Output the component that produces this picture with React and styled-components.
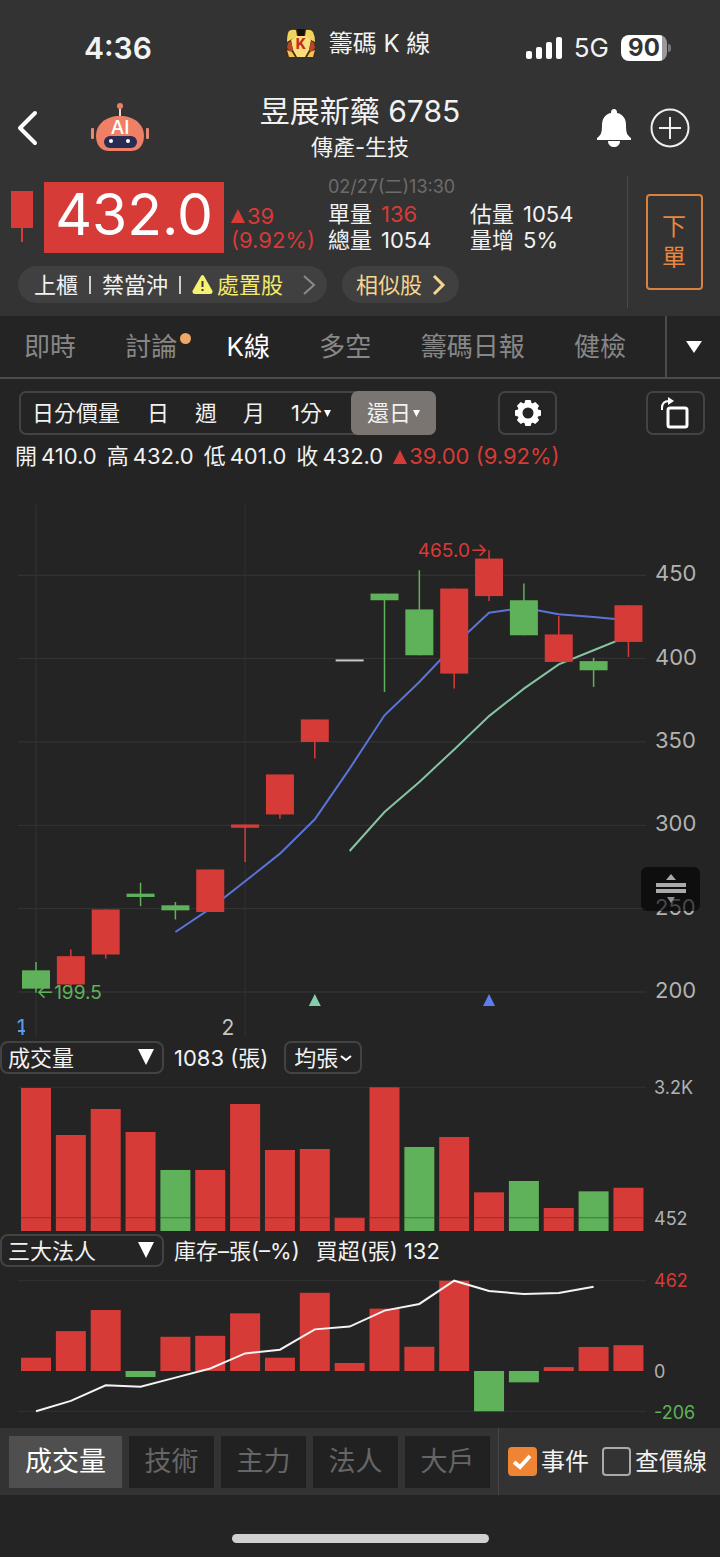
import React, { useState } from 'react';
import styled, { createGlobalStyle } from 'styled-components';

const RED = '#d73b37';
const GREEN = '#5fb259';

const GlobalStyle = createGlobalStyle`
  * {
    box-sizing: border-box;
  }

  body {
    margin: 0;
    background: #242424;
    color: #f2f2f2;
    font-family: Inter, "Noto Sans CJK TC", sans-serif;
  }

  button,
  select {
    margin: 0;
    padding: 0;
    border: none;
    background: none;
    color: inherit;
    font: inherit;
    cursor: pointer;
  }

  svg {
    display: block;
    flex-shrink: 0;
  }

  svg text {
    font-family: Inter, "Noto Sans CJK TC", sans-serif;
  }
`;

const Page = styled.div`
  display: flex;
  flex-direction: column;
  white-space: nowrap;
`;

const TopArea = styled.header`
  background: #333;
`;

const StatusBar = styled.div`
  display: grid;
  grid-template-columns: 1fr auto 1fr;
  align-items: center;
  padding: 28px 53px 0 84px;
  height: 68px;
`;

const Clock = styled.span`
  font-size: 30px;
  line-height: 40px;
  font-weight: 600;
`;

const AppName = styled.div`
  display: flex;
  align-items: center;
  gap: 12px;
  padding: 0 36px 8px 0;
  font-size: 24px;
  line-height: 32px;
`;

const StatusIcons = styled.div`
  display: flex;
  align-items: center;
  justify-content: flex-end;
  gap: 12px;
  font-size: 26px;
  line-height: 32px;
`;

const Battery = styled.span`
  position: relative;
  width: 46px;
  border-radius: 8px;
  background: linear-gradient(90deg, #fff 90%, #999 90%);
  color: #333;
  font-size: 24px;
  line-height: 26px;
  font-weight: 700;
  text-align: center;

  &::after {
    content: '';
    position: absolute;
    top: 9px;
    right: -4px;
    width: 3px;
    height: 8px;
    border-radius: 0 3px 3px 0;
    background: #777;
  }
`;

const NavBar = styled.div`
  display: grid;
  grid-template-columns: 1fr auto 1fr;
  align-items: center;
  padding: 24px 30px 10px 16px;
`;

const NavSide = styled.div`
  display: flex;
  align-items: center;
  justify-content: ${(props) => (props.$right ? 'flex-end' : 'flex-start')};
  gap: ${(props) => (props.$right ? '18px' : '52px')};
`;

const IconButton = styled.button`
  display: flex;
`;

const TitleBlock = styled.div`
  padding-left: 14px;
  text-align: center;
`;

const Title = styled.h1`
  margin: 0;
  font-size: 30px;
  line-height: 38px;
  font-weight: 400;
`;

const Subtitle = styled.p`
  margin: 0;
  font-size: 22px;
  line-height: 34px;
`;

const Quote = styled.section`
  display: flex;
  padding: 4px 0 8px;
`;

const QuoteMain = styled.div`
  flex: 1;
  padding-left: 11px;
`;

const QuoteRow = styled.div`
  display: flex;
  align-items: flex-start;
`;

const Price = styled.div`
  margin: 4px 7px 0 11px;
  width: 180px;
  height: 71px;
  background: ${RED};
  color: #fff;
  font-size: 57px;
  line-height: 66px;
  text-align: center;
`;

const Change = styled.div`
  display: flex;
  flex-direction: column;
  width: 97px;
  padding-top: 26px;
  color: ${RED};
  font-size: 22px;
  line-height: 24px;
`;

const WithTriangle = styled.span`
  display: flex;
  align-items: center;
  gap: 2px;
`;

const Facts = styled.div`
  display: grid;
  grid-template-columns: 142px auto;
  font-size: 22px;
  line-height: 26px;
`;

const FactTime = styled.time`
  grid-column: 1 / -1;
  padding-bottom: 5px;
  color: #6c6c6c;
  font-size: 18px;
  line-height: 18px;
`;

const Fact = styled.span`
  display: flex;
  gap: 9px;
`;

const Rise = styled.span`
  color: ${RED};
`;

const Pills = styled.div`
  display: flex;
  gap: 15px;
  margin-top: 13px;
  padding-left: 7px;
`;

const Pill = styled.button`
  display: flex;
  align-items: center;
  gap: ${(props) => (props.$wide ? '9px' : '6px')};
  height: 37px;
  padding: 0 ${(props) => (props.$wide ? '12px' : '11px')} 0 ${(props) => (props.$wide ? '16px' : '14px')};
  border-radius: 19px;
  background: #404040;
  color: ${(props) => (props.$wide ? '#f2f2f2' : '#f5d590')};
  font-size: 22px;
  line-height: 36px;
`;

const PillDivider = styled.i`
  width: 2px;
  height: 18px;
  margin: 0 2px;
  background: #d0d0d0;
`;

const PillWarning = styled.span`
  display: flex;
  align-items: center;
  gap: 4px;
  margin-right: 11px;
  color: #f4e96b;
`;

const OrderArea = styled.div`
  display: flex;
  align-items: center;
  justify-content: center;
  width: 93px;
  height: 132px;
  margin-top: -2px;
  border-left: 1px solid #4a4a4a;
`;

const OrderButton = styled.button`
  width: 57px;
  height: 96px;
  padding: 0 14px;
  border: 2px solid #d9813f;
  border-radius: 4px;
  color: #e8863f;
  font-size: 24px;
  line-height: 31px;
  white-space: normal;
`;

const Tabs = styled.nav`
  display: flex;
  height: 63px;
  border-bottom: 2px solid #4b4b4b;
`;

const TabList = styled.div`
  display: flex;
  flex: 1;
  align-items: center;
  justify-content: space-between;
  padding: 0 39px 0 24px;
`;

const Tab = styled.button`
  position: relative;
  color: ${(props) => (props.$active ? '#fff' : '#878787')};
  font-size: 26px;
  line-height: 36px;
`;

const NewDot = styled.i`
  position: absolute;
  top: 4px;
  right: -14px;
  width: 11px;
  height: 11px;
  border-radius: 50%;
  background: #eda766;
`;

const MoreTabs = styled.button`
  display: flex;
  align-items: center;
  justify-content: center;
  width: 55px;
  border-left: 2px solid #4b4b4b;
`;

const Toolbar = styled.div`
  display: flex;
  justify-content: space-between;
  padding: 12px 15px 0 19px;
`;

const ToolGroup = styled.div`
  display: flex;
  gap: 62px;
`;

const Periods = styled.div`
  display: flex;
  height: 44px;
  border: 2px solid #434343;
  border-radius: 7px;
`;

const Period = styled.button`
  display: flex;
  align-items: center;
  gap: 2px;
  margin: ${(props) => (props.$active ? '-2px -2px -2px 7px' : '0')};
  padding: 0 ${(props) => (props.$active ? '16px' : '13px')};
  border-radius: 7px;
  background: ${(props) => (props.$active ? '#7b7571' : 'none')};
  font-size: 22px;
  line-height: 36px;

  &:first-child {
    padding-left: 11px;
    padding-right: 14px;
  }
`;

const ToolButton = styled.button`
  display: flex;
  align-items: center;
  justify-content: center;
  width: 59px;
  height: 44px;
  border: 2px solid #434343;
  border-radius: 7px;
`;

const Legend = styled.div`
  display: flex;
  gap: 10px;
  padding: 7px 15px 0;
  font-size: 22px;
  line-height: 29px;
`;

const LegendItem = styled.span`
  display: flex;
  align-items: center;
  gap: 4px;
`;

const LegendChange = styled(WithTriangle)`
  color: ${RED};
`;

const ChartBox = styled.div`
  position: relative;

  svg {
    width: 100%;
    height: auto;
  }
`;

const ResizeHandle = styled.button`
  position: absolute;
  top: 69%;
  right: 20px;
  display: flex;
  justify-content: center;
  width: 59px;
  height: 44px;
  margin-top: 3px;
  padding-top: 7px;
  border-radius: 6px;
  background: rgba(0, 0, 0, 0.6);

  svg {
    width: 30px;
    height: 32px;
  }
`;

const PanelHead = styled.div`
  display: flex;
  align-items: center;
  gap: 16px;
  height: 33px;
  font-size: 22px;
  line-height: 30px;
`;

const SelectBox = styled.label`
  position: relative;
  width: 164px;
  margin-right: -6px;

  select {
    width: 100%;
    height: 33px;
    padding-left: 6px;
    border: 2px solid #434343;
    border-radius: 8px;
    appearance: none;
    font-size: 22px;
  }

  svg {
    position: absolute;
    top: 8px;
    right: 10px;
    pointer-events: none;
  }
`;

const AverageButton = styled.button`
  display: flex;
  align-items: center;
  gap: 2px;
  height: 33px;
  padding: 0 8px;
  border: 2px solid #434343;
  border-radius: 7px;
  font-size: 22px;
  line-height: 28px;
`;

const BottomBar = styled.div`
  display: flex;
  height: 67px;
  background: #333;
`;

const PanelTabs = styled.div`
  display: flex;
  flex: 1;
  align-items: center;
  gap: 7px;
  padding: 0 8px 0 9px;
  border-right: 1px solid #474747;
`;

const PanelTab = styled.button`
  flex: ${(props) => (props.$active ? '113' : '85')} 1 0;
  height: 52px;
  background: ${(props) => (props.$active ? '#4f4f4f' : '#212121')};
  color: ${(props) => (props.$active ? '#fff' : '#666')};
  font-size: 27px;
  line-height: 52px;
`;

const Checks = styled.div`
  display: flex;
  align-items: center;
  gap: 13px;
  padding: 0 13px 0 9px;
`;

const CheckLabel = styled.label`
  position: relative;
  display: flex;
  align-items: center;
  gap: 4px;
  font-size: 24px;
  line-height: 32px;

  input {
    width: 29px;
    height: 29px;
    margin: 0;
    border: 2px solid #aaa;
    border-radius: 4px;
    appearance: none;
  }

  input:checked {
    border-color: #ee8434;
    background: #ee8434;
  }

  svg {
    position: absolute;
    top: 8px;
    left: 5px;
    pointer-events: none;
  }
`;

const HomeArea = styled.div`
  display: flex;
  justify-content: center;
  padding: 39px 0 14px;
`;

const HomeIndicator = styled.div`
  width: 257px;
  height: 9px;
  border-radius: 5px;
  background: #d0d0d0;
`;

// open, close, high, low
const candles = [
  [213, 202, 218, 199.5],
  [204.5, 221.5, 225.5, 203],
  [222.5, 249.5, 249.5, 220],
  [259, 257, 265.5, 251.5],
  [252, 249, 254, 243.5],
  [248, 273.5, 273.5, 248],
  [298.5, 300.5, 300.5, 278],
  [306.5, 330.5, 330.5, 304],
  [350, 363.5, 363.5, 340],
  [399.5, 399.5, 399.5, 399.5],
  [439, 435, 439, 380],
  [429.5, 402, 453, 402],
  [391, 442, 442, 382],
  [437.5, 460, 465, 434.5],
  [435, 414, 445, 414],
  [398, 414.5, 425.5, 398],
  [398.5, 393, 400.5, 383],
  [410, 432, 432, 401],
];

const ma5 = [236, 250, 266.4, 283, 303.6, 334, 366, 386, 408, 427.5, 430.5, 426.6, 425, 423];
const ma10 = [284.6, 308, 326, 345.5, 365.5, 382, 396.5, 405, 413.5];

const volumes = [
  3185, 2195, 2743, 2258, 1458, 1458, 2848, 1879, 1900, 452, 3200, 1942, 2153, 987, 1226, 657, 1008, 1083,
];

const netBuys = [68, 204, 312, -31, 175, 180, 295, 68, 400, 41, 319, 124, 462, -206, -58, 20, 123, 132];
const holdings = [-206, -153, -73, -80, -34, 13, 90, 109, 213, 227, 309, 343, 462, 409, 394, 399, 431];

const xAt = (i) => 36 + i * 34.85;

// volume bars follow the change from the previous close
const volumeColor = (i) => (i > 0 && candles[i][1] < candles[i - 1][1] ? GREEN : RED);

const toPoints = (values, start, toY) => values.map((v, i) => `${xAt(i + start)},${toY(v)}`).join(' ');

const Triangle = ({ size = 14, color = 'currentColor', down }) => (
  <svg width={size} height={size} viewBox="0 0 14 14" fill={color}>
    <path d={down ? 'M0 0H14L7 14Z' : 'M0 14H14L7 0Z'} />
  </svg>
);

const AppLogo = () => (
  <svg width="32" height="32" viewBox="0 0 32 32">
    <path d="M5 2Q7 0 12 1H22Q27 0 29 4L30 14 31 22 29 29Q28 31 24 30H7Q3 31 2 27L1 21 2 13Z" fill="#4a2a12" />
    <path d="M4 3Q7 1 11 2L12 8 7 11 2 14Q2 6 4 3Z" fill="#f2d35e" />
    <path d="M21 2Q26 1 28 4 30 8 30 14L24 11 20 8Z" fill="#f2d35e" />
    <path d="M11 8H21L26 12 24 22 20 29H12L8 22 6 12Z" fill="#f7e07a" />
    <path d="M12 1H20L19 8H13Z" fill="#17120c" />
    <path d="M3 15L6 13 8 22 6 24 2 20Z" fill="#b5482c" />
    <path d="M29 15L26 13 24 22 26 24 30 20Z" fill="#b5482c" />
    <path d="M2 22L7 24 10 29 4 29Z" fill="#edc653" />
    <path d="M30 22L25 24 22 29 28 29Z" fill="#edc653" />
    <text x="16" y="21" fontSize="14" fontWeight="800" fill="#c5301f" textAnchor="middle">K</text>
  </svg>
);

const Robot = () => (
  <svg width="60" height="52" viewBox="0 0 60 52">
    <path d="M30 7V17" stroke="#e9d6d0" strokeWidth="2" />
    <circle cx="30" cy="4" r="3" fill="#ef7c65" />
    <rect x="1" y="26" width="3" height="11" rx="1" fill="#e98975" />
    <rect x="56" y="26" width="3" height="11" rx="1" fill="#e98975" />
    <path d="M30 14C44 14 54 22 54 34C54 45 47 49 41 49H19C13 49 6 45 6 34C6 22 16 14 30 14Z" fill="#f07f67" />
    <rect x="14" y="34" width="33" height="12" rx="6" fill="#292c52" />
    <circle cx="21" cy="39" r="2" fill="#fff" />
    <circle cx="38" cy="39" r="2" fill="#fff" />
    <text x="30" y="32" fontSize="19" fontWeight="500" fill="#fff" textAnchor="middle">AI</text>
  </svg>
);

const Gear = () => (
  <svg width="28" height="28" viewBox="-14 -14 28 28">
    {[0, 45, 90, 135, 180, 225, 270, 315].map((deg) => (
      <path key={deg} d="M-4 -8L-3 -12Q-3 -13 -2 -13H2Q3 -13 3 -12L4 -8Z" fill="#fff" transform={`rotate(${deg})`} />
    ))}
    <circle r="8" fill="none" stroke="#fff" strokeWidth="5" />
  </svg>
);

const KLineChart = () => {
  const toY = (price) => 521 - (price - 200) * 1.667;

  return (
    <ChartBox>
      <svg viewBox="0 0 720 570" role="img" aria-label="K線圖">
        {[450, 400, 350, 300, 250, 200].map((price) => (
          <g key={price}>
            <path d={`M18 ${toY(price)}H646`} stroke="#363636" />
            <text x="655" y={toY(price) + 6} fontSize="22" fill="#b2b2b2">{price}</text>
          </g>
        ))}
        <path d={`M36 34V565M${xAt(6)} 34V565`} stroke="#323232" />
        <polyline points={toPoints(ma5, 4, toY)} fill="none" stroke="#5a74d8" strokeWidth="2" />
        <polyline points={toPoints(ma10, 9, toY)} fill="none" stroke="#86c5a4" strokeWidth="2" />
        {candles.map(([open, close, high, low], i) => {
          const flat = open === close;
          const color = flat ? '#c9c9c9' : close > open ? RED : GREEN;
          const top = toY(Math.max(open, close));
          const height = Math.max(Math.abs(open - close) * 1.667, 2);
          return (
            <g key={i} fill={color}>
              <path d={`M${xAt(i)} ${toY(high)}V${toY(low)}`} stroke={color} strokeWidth="1.5" />
              <rect x={xAt(i) - 14} y={top} width="28" height={height} />
            </g>
          );
        })}
        <text x="36" y="528" fontSize="19" fill={GREEN}>←199.5</text>
        <text x="488" y="86" fontSize="19" fill={RED} textAnchor="end">465.0→</text>
        <path d={`M${xAt(8)} 523l6 12h-12z`} fill="#86ceab" />
        <path d={`M${xAt(13)} 523l6 12h-12z`} fill="#5c7ef0" />
        <text x="228" y="564" fontSize="21" fill="#c4c4c4" textAnchor="middle">2</text>
        <text x="21" y="564" fontSize="21" fill="#5c9cea" textAnchor="middle">1</text>
        <path d="M18 560H25" stroke="#5c9cea" strokeWidth="2" />
      </svg>
      <ResizeHandle aria-label="調整高度">
        <svg viewBox="0 0 30 32" fill="#aaa">
          <path d="M15 0L20 6H10Z" />
          <path d="M0 9H30V13H0ZM0 15H30V19H0Z" />
          <path d="M15 29L19 23H11Z" opacity="0.8" />
        </svg>
      </ResizeHandle>
    </ChartBox>
  );
};

const VolumeChart = () => {
  const toY = (v) => 157 - (v - 172) / 21.07;

  return (
    <ChartBox>
      <svg viewBox="0 0 720 160" role="img" aria-label="成交量">
        <path d={`M18 ${toY(3200)}H646`} stroke="#323232" />
        {volumes.map((v, i) => (
          <rect key={i} x={xAt(i) - 15} y={toY(v)} width="30" height={157 - toY(v)} fill={volumeColor(i)} />
        ))}
        <path d={`M18 ${toY(452)}H646`} stroke="#333" opacity="0.5" />
        <text x="654" y="20" fontSize="18" fill="#b2b2b2">3.2K</text>
        <text x="654" y="151" fontSize="18" fill="#b2b2b2">452</text>
      </svg>
    </ChartBox>
  );
};

const InvestorChart = () => {
  const toY = (v) => 104 - v * 0.1955;

  return (
    <ChartBox>
      <svg viewBox="0 0 720 161" role="img" aria-label="三大法人">
        <path d={`M18 ${toY(462)}H646M18 ${toY(-206)}H646`} stroke="#323232" />
        {netBuys.map((v, i) => (
          <rect
            key={i}
            x={xAt(i) - 15}
            y={Math.min(toY(v), 104)}
            width="30"
            height={Math.abs(v) * 0.1955}
            fill={v > 0 ? RED : GREEN}
          />
        ))}
        <polyline points={toPoints(holdings, 0, toY)} fill="none" stroke="#f4f4f4" strokeWidth="2" />
        <text x="654" y="20" fontSize="18" fill={RED}>462</text>
        <text x="654" y="111" fontSize="18" fill="#b2b2b2">0</text>
        <text x="654" y="152" fontSize="18" fill={GREEN}>-206</text>
      </svg>
    </ChartBox>
  );
};

const PanelSelect = ({ label, options }) => (
  <SelectBox>
    <select aria-label={label}>
      {options.map((option) => (
        <option key={option}>{option}</option>
      ))}
    </select>
    <Triangle size={16} color="#fff" down />
  </SelectBox>
);

const tabs = ['即時', '討論', 'K線', '多空', '籌碼日報', '健檢'];
const periods = ['日分價量', '日', '週', '月', '1分', '還日'];
const prices = [['開', '410.0'], ['高', '432.0'], ['低', '401.0'], ['收', '432.0']];
const panels = ['成交量', '技術', '主力', '法人', '大戶'];

const App = () => {
  const [tab, setTab] = useState('K線');
  const [period, setPeriod] = useState('還日');
  const [panel, setPanel] = useState('成交量');
  const [showEvents, setShowEvents] = useState(true);
  const [showPriceLine, setShowPriceLine] = useState(false);

  return (
    <Page>
      <GlobalStyle />
      <TopArea>
        <StatusBar>
          <Clock>4:36</Clock>
          <AppName>
            <AppLogo />
            <span>籌碼 K 線</span>
          </AppName>
          <StatusIcons>
            <svg width="36" height="22" viewBox="0 0 36 22" fill="#fff">
              <rect x="0" y="14" width="6" height="8" rx="2" />
              <rect x="10" y="10" width="6" height="12" rx="2" />
              <rect x="20" y="5" width="6" height="17" rx="2" />
              <rect x="30" y="0" width="6" height="22" rx="2" />
            </svg>
            <span>5G</span>
            <Battery>90</Battery>
          </StatusIcons>
        </StatusBar>

        <NavBar>
          <NavSide>
            <IconButton aria-label="返回">
              <svg width="22" height="36" viewBox="0 0 22 36" fill="none" stroke="#fff" strokeWidth="4" strokeLinecap="round" strokeLinejoin="round">
                <path d="M19 3L4 18L19 33" />
              </svg>
            </IconButton>
            <IconButton aria-label="AI">
              <Robot />
            </IconButton>
          </NavSide>
          <TitleBlock>
            <Title>昱展新藥 6785</Title>
            <Subtitle>傳產-生技</Subtitle>
          </TitleBlock>
          <NavSide $right>
            <IconButton aria-label="通知">
              <svg width="36" height="38" viewBox="0 0 36 38" fill="#fff">
                <path d="M18 0C20 0 21 1 21 4C27 5 30 10 30 16C30 24 31 26 35 29V31H1V29C5 26 6 24 6 16C6 10 9 5 15 4C15 1 16 0 18 0Z" />
                <path d="M12 32H24C24 36 21 38 18 38S12 36 12 32Z" />
              </svg>
            </IconButton>
            <IconButton aria-label="加入">
              <svg width="40" height="40" viewBox="0 0 40 40" fill="none" stroke="#f0f0f0" strokeWidth="2">
                <circle cx="20" cy="20" r="18.5" />
                <path d="M9 20H31M20 9V31" />
              </svg>
            </IconButton>
          </NavSide>
        </NavBar>

        <Quote>
          <QuoteMain>
            <QuoteRow>
              <svg width="22" height="65" viewBox="0 0 22 65">
                <path d="M0 13H22V50H12V64H10V50H0Z" fill={RED} />
              </svg>
              <Price>432.0</Price>
              <Change>
                <WithTriangle><Triangle />39</WithTriangle>
                <span>(9.92%)</span>
              </Change>
              <Facts>
                <FactTime>02/27(二)13:30</FactTime>
                <Fact>單量 <Rise>136</Rise></Fact>
                <Fact>估量 <span>1054</span></Fact>
                <Fact>總量 <span>1054</span></Fact>
                <Fact>量增 <span>5%</span></Fact>
              </Facts>
            </QuoteRow>
            <Pills>
              <Pill $wide>
                <span>上櫃</span>
                <PillDivider />
                <span>禁當沖</span>
                <PillDivider />
                <PillWarning>
                  <svg width="21" height="19" viewBox="0 0 21 19">
                    <path d="M9 1Q10.500 -1 12 1L20.500 16Q21 19 18 19H3Q0 19 .5 16Z" fill="#f8f070" />
                    <path d="M10.500 6V12M10.500 14V16" stroke="#3a3a3a" strokeWidth="2" />
                  </svg>
                  處置股
                </PillWarning>
                <svg width="12" height="20" viewBox="0 0 12 20" fill="none" stroke="#8a8a8a" strokeWidth="2">
                  <path d="M1 1L11 10L1 19" />
                </svg>
              </Pill>
              <Pill>
                <span>相似股</span>
                <svg width="20" height="20" viewBox="0 0 20 20" fill="none" stroke="#f5d590" strokeWidth="3">
                  <path d="M6 1L15 10L6 19" />
                </svg>
              </Pill>
            </Pills>
          </QuoteMain>
          <OrderArea>
            <OrderButton>下 單</OrderButton>
          </OrderArea>
        </Quote>
      </TopArea>

      <Tabs>
        <TabList>
          {tabs.map((name) => (
            <Tab key={name} $active={tab === name} onClick={() => setTab(name)}>
              {name}
              {name === '討論' && <NewDot />}
            </Tab>
          ))}
        </TabList>
        <MoreTabs aria-label="更多">
          <svg width="18" height="12" viewBox="0 0 18 12"><path d="M1 0H17L9 12Z" fill="#fff" /></svg>
        </MoreTabs>
      </Tabs>

      <Toolbar>
        <ToolGroup>
          <Periods>
            {periods.map((name) => (
              <Period key={name} $active={period === name} onClick={() => setPeriod(name)}>
                {name}
                {(name === '1分' || name === '還日') && <Triangle size={7} color="#fff" down />}
              </Period>
            ))}
          </Periods>
          <ToolButton aria-label="設定">
            <Gear />
          </ToolButton>
        </ToolGroup>
        <ToolButton aria-label="旋轉">
          <svg width="32" height="34" viewBox="0 0 32 34" fill="none" stroke="#fff" strokeWidth="3">
            <rect x="8" y="12" width="19" height="19" rx="2" />
            <path d="M2 14V12Q2 5 9 5" strokeWidth="2" />
            <path d="M8 1L14 5L8 9Z" fill="#fff" stroke="none" />
          </svg>
        </ToolButton>
      </Toolbar>

      <Legend>
        {prices.map(([name, value]) => (
          <LegendItem key={name}>
            {name}
            <span>{value}</span>
          </LegendItem>
        ))}
        <LegendChange><Triangle />39.00 (9.92%)</LegendChange>
      </Legend>

      <KLineChart />

      <PanelHead>
        <PanelSelect label="副圖一" options={['成交量', '技術', '主力']} />
        <span>1083 (張)</span>
        <AverageButton>
          均張
          <svg width="12" height="8" viewBox="0 0 12 8" fill="none" stroke="#fff" strokeWidth="2"><path d="M1 2L6 6L11 2" /></svg>
        </AverageButton>
      </PanelHead>
      <VolumeChart />

      <PanelHead>
        <PanelSelect label="副圖二" options={['三大法人', '外資', '投信']} />
        <span>庫存–張(–%)</span>
        <span>買超(張) 132</span>
      </PanelHead>
      <InvestorChart />

      <BottomBar>
        <PanelTabs>
          {panels.map((name) => (
            <PanelTab key={name} $active={panel === name} onClick={() => setPanel(name)}>
              {name}
            </PanelTab>
          ))}
        </PanelTabs>
        <Checks>
          <CheckLabel>
            <input type="checkbox" checked={showEvents} onChange={() => setShowEvents(!showEvents)} />
            {showEvents && (
              <svg width="19" height="16" viewBox="0 0 19 16" fill="none" stroke="#fff" strokeWidth="4">
                <path d="M1 8L7 13L17 2" />
              </svg>
            )}
            事件
          </CheckLabel>
          <CheckLabel>
            <input type="checkbox" checked={showPriceLine} onChange={() => setShowPriceLine(!showPriceLine)} />
            查價線
          </CheckLabel>
        </Checks>
      </BottomBar>

      <HomeArea>
        <HomeIndicator />
      </HomeArea>
    </Page>
  );
};

export default App;
